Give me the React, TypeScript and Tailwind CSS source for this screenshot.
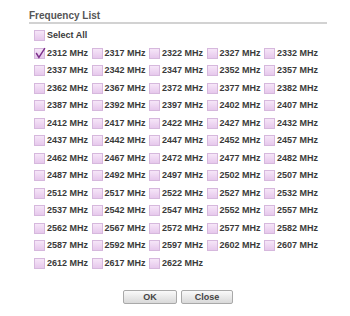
import { useState } from 'react';

const freqs = Array.from({ length: 63 }, (_, i) => 2312 + i * 5);

function Box({ checked }: { checked: boolean }) {
  return (
    <span className="relative w-[11px] h-[11px] shrink-0 border border-[#d6b8dd] bg-gradient-to-b from-[#f6e6f8] to-[#e6c8ec]">
      {checked && (
        <svg viewBox="0 0 11 11" className="absolute left-[-1px] top-[-2px] w-[12px] h-[12px]">
          <polyline points="2,5.5 4.5,9.5 10,1" fill="none" stroke="#7a2f8a" strokeWidth="1.3" />
        </svg>
      )}
    </span>
  );
}

export default function App() {
  const [selected, setSelected] = useState<number[]>([2312]);

  const toggle = (f: number) =>
    setSelected((s) => (s.includes(f) ? s.filter((x) => x !== f) : [...s, f]));

  return (
    <div className="w-[350px] h-[316px] bg-white font-['Liberation_Sans',Arial,sans-serif] text-[#3a3a3a]">
      <div className="pl-[29px] pt-[11px] w-[327px]">
        <div className="border-b-2 border-[#d2d2d2] pb-[1px] text-[10px] leading-[10px] font-bold text-[#555]">
          Frequency List
        </div>

        <div className="pl-[5px] pt-[3px]">
          <div className="flex items-center h-[17.5px] gap-[2px] text-[9px] font-bold">
            <Box checked={false} />
            <span>Select All</span>
          </div>
          <div className="grid grid-cols-[repeat(5,57.5px)] auto-rows-[17.5px]">
            {freqs.map((f) => (
              <div
                key={f}
                className="flex items-center gap-[2px] text-[9px] font-bold cursor-pointer"
                onClick={() => toggle(f)}
              >
                <Box checked={selected.includes(f)} />
                <span>{f} MHz</span>
              </div>
            ))}
          </div>
        </div>

        <div className="flex justify-center gap-[4px] mt-[18px]">
          <button className="w-[54px] h-[14px] border border-[#a9a9a9] rounded-[2px] bg-gradient-to-b from-[#fafafa] to-[#d9d9d9] text-[9px] leading-[12px] font-bold text-[#444]">
            OK
          </button>
          <button className="w-[52px] h-[14px] border border-[#a9a9a9] rounded-[2px] bg-gradient-to-b from-[#fafafa] to-[#d9d9d9] text-[9px] leading-[12px] font-bold text-[#444]">
            Close
          </button>
        </div>
      </div>
    </div>
  );
}
